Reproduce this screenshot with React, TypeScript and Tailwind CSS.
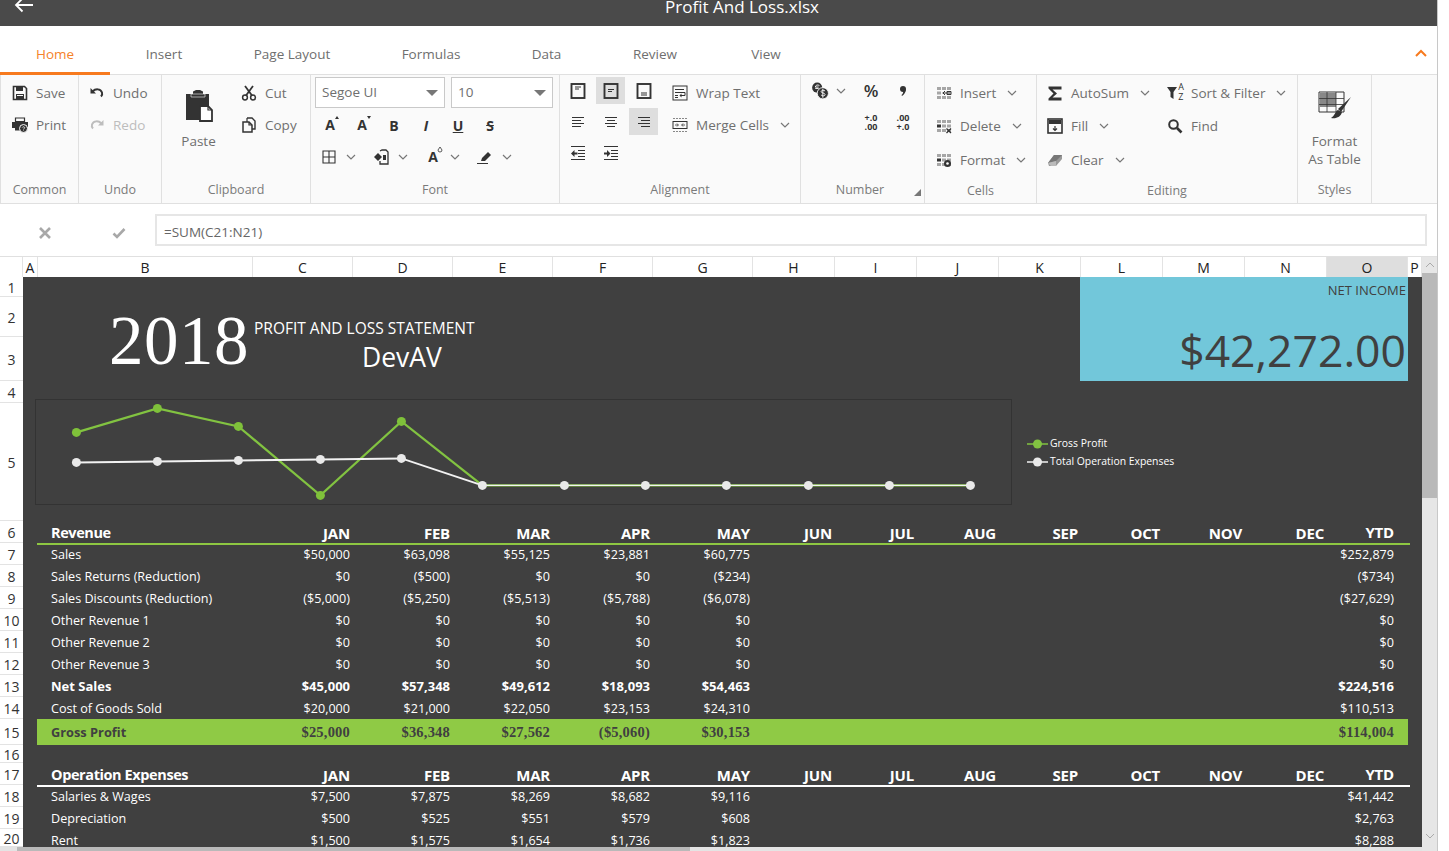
import type { ReactNode } from 'react';

const MONTHS = ['JAN', 'FEB', 'MAR', 'APR', 'MAY', 'JUN', 'JUL', 'AUG', 'SEP', 'OCT', 'NOV', 'DEC'];

const TABS = [
  { name: 'Home', width: 'w-[110px]', active: true },
  { name: 'Insert', width: 'w-[108px]' },
  { name: 'Page Layout', width: 'w-[148px]' },
  { name: 'Formulas', width: 'w-[130px]' },
  { name: 'Data', width: 'w-[101px]' },
  { name: 'Review', width: 'w-[116px]' },
  { name: 'View', width: 'w-[106px]' },
];

const COLUMNS = ['', 'A', 'B', 'C', 'D', 'E', 'F', 'G', 'H', 'I', 'J', 'K', 'L', 'M', 'N', 'O', 'P'];

const ROW_NUMBERS = [
  { n: 1, h: 'h-[20px]' },
  { n: 2, h: 'h-[40px]' },
  { n: 3, h: 'h-[44px]' },
  { n: 4, h: 'h-[22px]' },
  { n: 5, h: 'h-[118px]' },
  { n: 6, h: 'h-[22px]' },
  { n: 7, h: 'h-[22px]' },
  { n: 8, h: 'h-[22px]' },
  { n: 9, h: 'h-[22px]' },
  { n: 10, h: 'h-[22px]' },
  { n: 11, h: 'h-[22px]' },
  { n: 12, h: 'h-[22px]' },
  { n: 13, h: 'h-[22px]' },
  { n: 14, h: 'h-[22px]' },
  { n: 15, h: 'h-[26px]' },
  { n: 16, h: 'h-[18px]' },
  { n: 17, h: 'h-[22px]' },
  { n: 18, h: 'h-[22px]' },
  { n: 19, h: 'h-[22px]' },
  { n: 20, h: 'h-[18px]' },
];

const REVENUE = [
  { label: 'Sales', vals: ['$50,000', '$63,098', '$55,125', '$23,881', '$60,775'], ytd: '$252,879' },
  { label: 'Sales Returns (Reduction)', vals: ['$0', '($500)', '$0', '$0', '($234)'], ytd: '($734)' },
  { label: 'Sales Discounts (Reduction)', vals: ['($5,000)', '($5,250)', '($5,513)', '($5,788)', '($6,078)'], ytd: '($27,629)' },
  { label: 'Other Revenue 1', vals: ['$0', '$0', '$0', '$0', '$0'], ytd: '$0' },
  { label: 'Other Revenue 2', vals: ['$0', '$0', '$0', '$0', '$0'], ytd: '$0' },
  { label: 'Other Revenue 3', vals: ['$0', '$0', '$0', '$0', '$0'], ytd: '$0' },
  { label: 'Net Sales', vals: ['$45,000', '$57,348', '$49,612', '$18,093', '$54,463'], ytd: '$224,516', bold: true },
  { label: 'Cost of Goods Sold', vals: ['$20,000', '$21,000', '$22,050', '$23,153', '$24,310'], ytd: '$110,513' },
];

const EXPENSES = [
  { label: 'Salaries & Wages', vals: ['$7,500', '$7,875', '$8,269', '$8,682', '$9,116'], ytd: '$41,442' },
  { label: 'Depreciation', vals: ['$500', '$525', '$551', '$579', '$608'], ytd: '$2,763' },
  { label: 'Rent', vals: ['$1,500', '$1,575', '$1,654', '$1,736', '$1,823'], ytd: '$8,288' },
];

const GROSS = [[41, 33], [122, 9], [203, 27], [285, 96], [366, 22], [447, 86], [529, 86], [610, 86], [691, 86], [773, 86], [854, 86], [935, 86]];
const TOTAL = [[41, 63], [122, 62], [203, 61], [285, 60], [366, 59], [447, 86], [529, 86], [610, 86], [691, 86], [773, 86], [854, 86], [935, 86]];

const ROW_GRID = 'grid grid-cols-[216px_repeat(5,100px)_repeat(7,82px)_81px]';

function Svg({ children, size = 16 }: { children: ReactNode; size?: number }) {
  return (
    <svg width={size} height={size} viewBox="0 0 16 16" fill="none" className="shrink-0">
      {children}
    </svg>
  );
}

function Chevron() {
  return (
    <svg width="10" height="6" viewBox="0 0 10 6" fill="none" className="shrink-0">
      <path d="M1 1l4 4 4-4" stroke="#777" strokeWidth="1.2" />
    </svg>
  );
}

const SaveIcon = () => (
  <Svg>
    <path d="M1.500 1.500h11l2 2v11h-13z" stroke="#333" strokeWidth="1.600" />
    <path d="M4 1.500h7V6H4zM4 9h8v5H4z" fill="#333" />
    <path d="M5 10.500h6" stroke="#fafafa" />
  </Svg>
);
const PrintIcon = () => (
  <Svg>
    <path d="M3.500 1h9v3.500h-9z" stroke="#333" strokeWidth="1.200" />
    <path d="M0 5h16v5H9v3.500H3V11H0z" fill="#333" />
    <circle cx="11.500" cy="11.500" r="4" fill="#333" stroke="#fafafa" />
    <path d="M10.300 10.500c.5-1.100 2.400-.8 2.400.3 0 .8-1.200.8-1.200 1.700M11.500 13.500v.6" stroke="#fff" strokeWidth=".8" />
  </Svg>
);
const UndoIcon = ({ color = '#333', flip = false }: { color?: string; flip?: boolean }) => (
  <Svg>
    <g transform={flip ? 'translate(16 0) scale(-1 1)' : undefined}>
      <path d="M1.500 3v5.500H7z" fill={color} />
      <path d="M3.500 6.500c3-3 8-3 9.500 1 .5 1.500 0 3-1 4" stroke={color} strokeWidth="2" />
    </g>
  </Svg>
);
const PasteIcon = () => (
  <svg width="28" height="33" viewBox="0 0 28 33" fill="none" className="shrink-0">
    <path d="M1 5h7V2.500L11 1h4l3 1.500V5h6v26H1z" fill="#333" />
    <path d="M6 5h14v3H6z" fill="#333" stroke="#fafafa" strokeWidth=".6" />
    <path d="M15 17h8l4 4v11H15z" fill="#fff" stroke="#333" strokeWidth="1.800" />
    <path d="M23 17v4h4" stroke="#333" strokeWidth="1.200" />
  </svg>
);
const CutIcon = () => (
  <Svg>
    <circle cx="4" cy="12.500" r="2.400" stroke="#333" strokeWidth="1.500" />
    <circle cx="12" cy="12.500" r="2.400" stroke="#333" strokeWidth="1.500" />
    <path d="M5 10.500L12 1M11 10.500L4 1" stroke="#333" strokeWidth="1.800" />
  </Svg>
);
const CopyIcon = () => (
  <Svg>
    <path d="M6 1h5l3 3v8h-3" stroke="#333" strokeWidth="1.400" />
    <path d="M2 5h6l3 3v7H2z" fill="#fafafa" stroke="#333" strokeWidth="1.500" />
    <path d="M6 1v4M8 5v3h3" stroke="#333" strokeWidth="1.200" />
  </Svg>
);
const GridIcon = () => (
  <Svg>
    <path d="M2 2h12v12H2zM8 2v12M2 8h12" stroke="#333" strokeWidth="1.100" />
  </Svg>
);
const FillColorIcon = () => (
  <Svg>
    <path d="M7 2l2-1h4l2 2v12H7v-3" stroke="#333" strokeWidth="1.300" />
    <path d="M5 4l4 4-4 4-4-4z" fill="#333" />
    <path d="M10 6h3v5h-3z" fill="#333" />
  </Svg>
);
const PenIcon = () => (
  <Svg>
    <path d="M5 9l6-6 3 3-6 6H4z" fill="#333" />
    <path d="M0 14.500h11" stroke="#333" strokeWidth="1" />
  </Svg>
);
const LetterIcon = ({ mark }: { mark: 'up' | 'down' | 'drop' }) => (
  <span className="relative flex w-4 h-4 items-center justify-center text-[14px] leading-none font-bold text-[#333]">
    A
    <svg width="6" height="6" viewBox="0 0 6 6" className="absolute -right-0.5 -top-0.5">
      {mark === 'up' && <path d="M3 1l2 3H1z" fill="#333" />}
      {mark === 'down' && <path d="M3 4L1 1h4z" fill="#333" />}
      {mark === 'drop' && <path d="M3 0l2 3a2 2 0 11-4 0z" stroke="#333" fill="none" strokeWidth=".8" />}
    </svg>
  </span>
);
const AlignBox = ({ v }: { v: 'top' | 'mid' | 'bot' }) => {
  const y = v === 'top' ? 4 : v === 'mid' ? 6.500 : 10;
  return (
    <Svg>
      <rect x="1.500" y="1" width="13" height="14" stroke="#333" strokeWidth="1.900" />
      <path d={`M5 ${y}h6M5 ${y + 2}h${v === 'bot' ? 6 : 4}`} stroke="#333" strokeWidth="1" />
    </Svg>
  );
};
const AlignLines = ({ a }: { a: 'l' | 'c' | 'r' }) => {
  const d = {
    l: 'M2 3.500h12M2 6.500h9M2 9.500h12M2 12.500h9',
    c: 'M2 3.500h12M4 6.500h8M2 9.500h12M4 12.500h8',
    r: 'M2 3.500h12M5 6.500h9M2 9.500h12M5 12.500h9',
  }[a];
  return (
    <Svg>
      <path d={d} stroke="#333" strokeWidth="1" />
    </Svg>
  );
};
const IndentIcon = ({ more }: { more?: boolean }) => (
  <Svg>
    <path d="M1 1.500h14M8 5.500h7M8 8.500h7M8 11.500h7M1 14.500h14" stroke="#333" strokeWidth="1.100" />
    <path d={more ? 'M1 7.500h3V5l3.500 3.500L4 12V9.500H1z' : 'M7.500 7.500h-3V5L1 8.500 4.500 12V9.500h3z'} fill="#333" />
  </Svg>
);
const WrapIcon = () => (
  <Svg>
    <rect x="1" y="1" width="14" height="14" stroke="#333" strokeWidth="1" />
    <path d="M3 4.500h9M3 7.500h10v3H8M3 10.500h3M3 12.500h3" stroke="#333" strokeWidth="1" />
    <path d="M9.500 8.500l-2 2 2 2z" fill="#333" />
  </Svg>
);
const MergeIcon = () => (
  <Svg>
    <path d="M1 1.500h14M1 14.500h14" stroke="#888" strokeWidth="1.200" strokeDasharray="2 1" />
    <rect x="1" y="4.500" width="14" height="7" stroke="#333" strokeWidth="1" />
    <path d="M3 8h3M13 8h-3M5 6.500L6.500 8 5 9.500M11 6.500L9.500 8 11 9.500" stroke="#333" strokeWidth=".8" />
  </Svg>
);
const CoinsIcon = () => (
  <Svg size={18}>
    <circle cx="5.500" cy="5" r="4.500" fill="#333" />
    <circle cx="10.500" cy="10" r="5" fill="#333" stroke="#fafafa" strokeWidth=".8" />
    <path d="M7.500 3.200C6 2 4 2.800 3.800 4.500h3M3.800 5.800h3" stroke="#fff" strokeWidth=".8" />
    <path d="M12.500 8c-1-1-3.500-.8-3.500.6 0 1.600 3.500.8 3.500 2.600 0 1.400-2.500 1.400-3.500.4M10.500 6v8" stroke="#fff" strokeWidth=".8" />
  </Svg>
);
const CommaIcon = () => (
  <Svg>
    <circle cx="8" cy="6" r="3" fill="#333" />
    <path d="M10.800 6c.3 3-1.500 5.500-3.800 7L6.500 12c1.200-1 2-2.500 1.500-3.500z" fill="#333" />
  </Svg>
);
const CellsIcon = ({ kind }: { kind: 'insert' | 'delete' | 'format' }) => (
  <Svg>
    <path d="M1 2h4v3H1zM6 2h4v3H6zM11 2h4v3h-4zM1 11h4v3H1zM6 11h4v3H6zM11 11h4v3h-4z" fill="#a6a6a6" />
    {kind === 'insert' ? (
      <>
        <path d="M1 6.500h4v3H1z" fill="#a6a6a6" />
        <path d="M6.500 8h8M9 6L7 8l2 2M11 6.500h4v3h-4z" stroke="#333" strokeWidth="1" />
      </>
    ) : (
      <>
        <path d="M1 6.500h4v3H1z" fill="#333" />
        <path d="M6 6.500h4v3H6zM11 6.500h4v3h-4z" fill="#a6a6a6" />
      </>
    )}
    {kind === 'delete' && <path d="M10.500 10.500l4.500 4.500M15 10.500L10.500 15" stroke="#333" strokeWidth="1.300" />}
    {kind === 'format' && (
      <>
        <circle cx="11.500" cy="11.500" r="3.500" fill="#333" />
        <circle cx="11.500" cy="11.500" r="1.300" fill="#fff" />
      </>
    )}
  </Svg>
);
const SigmaIcon = () => (
  <Svg>
    <path d="M1.500 1.500h13v3h-9l4.500 4-4.500 4h9v3h-13v-2l5-5-5-5z" fill="#333" />
  </Svg>
);
const FillIcon = () => (
  <Svg>
    <rect x="1" y="1" width="14" height="14" stroke="#333" strokeWidth="1.600" />
    <path d="M2 2h12v4H2z" fill="#333" />
    <path d="M8 8v4M6 10.500l2 2 2-2" stroke="#333" strokeWidth="1.200" />
  </Svg>
);
const SortIcon = () => (
  <span className="relative flex w-4 h-4 shrink-0">
    <Svg>
      <path d="M0 2h10L6.500 7v7l-3-2V7z" fill="#333" />
    </Svg>
    <span className="absolute right-[-1px] top-[-3px] text-[9px] leading-[10px] text-[#333]">
      A<br />Z
    </span>
  </span>
);
const FindIcon = () => (
  <Svg>
    <circle cx="6.500" cy="6.500" r="4.300" stroke="#333" strokeWidth="2" />
    <path d="M10 10l4.500 4.500" stroke="#333" strokeWidth="2.600" />
  </Svg>
);
const ClearIcon = () => (
  <Svg>
    <path d="M7 3h8v4l-6 7H2l-1-3z" fill="#999" />
    <path d="M1 11l6-8h8l-6 6z" fill="#777" />
    <path d="M1 11l3 3h5V9z" fill="#bbb" />
  </Svg>
);
const TableBrushIcon = () => (
  <svg width="34" height="29" viewBox="0 0 34 29" fill="none" className="shrink-0">
    <path d="M1 1h25v20H1z" fill="#fafafa" stroke="#333" strokeWidth="1" />
    <path d="M2 2h16v14H2z" fill="#888" />
    <path d="M1 7.500h25M1 13.500h25M9 1v20M18 1v20" stroke="#333" strokeWidth=".8" />
    <path d="M33 6l-13 12 3 3z" fill="#333" />
    <path d="M20 19c-3 1-3 6-7 8 5 1 10-1 11-6z" fill="#333" />
  </svg>
);

function RibbonButton({ icon, label, muted, chevron, h = 'h-8' }: { icon: ReactNode; label: string; muted?: boolean; chevron?: boolean; h?: string }) {
  return (
    <div className={`flex items-center text-[13.500px] ${h}`}>
      <span className="flex w-6 shrink-0">{icon}</span>
      <span className={muted ? 'text-[#bdbdbd]' : 'text-[#6f6f6f]'}>{label}</span>
      {chevron && (
        <span className="ml-[11px]">
          <Chevron />
        </span>
      )}
    </div>
  );
}

function RibbonGroup({ label, width, children, labelPad = '' }: { label: string; width: string; children: ReactNode; labelPad?: string }) {
  return (
    <div className={`relative flex flex-col border-r border-[#e0e0e0] ${width}`}>
      <div className="h-[102px]">{children}</div>
      <div className={`flex-1 text-center leading-[27px] text-[#7a7a7a] ${labelPad}`}>{label}</div>
    </div>
  );
}

function Cell({ children, width = 'w-8', height = 'h-8', active }: { children: ReactNode; width?: string; height?: string; active?: boolean }) {
  return (
    <div className={`flex items-center justify-center ${width} ${height}`}>
      <div className={`flex items-center justify-center w-[29px] h-[27px] ${active ? 'bg-[#dedede]' : ''}`}>{children}</div>
    </div>
  );
}

function Combo({ text, width }: { text: string; width: string }) {
  return (
    <div className={`flex items-center justify-between h-[31px] px-[6px] bg-white border border-[#c9c9c9] text-[13.500px] text-[#6f6f6f] ${width}`}>
      <span>{text}</span>
      <svg width="12" height="6" viewBox="0 0 12 6">
        <path d="M0 0h12L6 6z" fill="#777" />
      </svg>
    </div>
  );
}

function DataRow({ label, vals, ytd, bold }: { label: string; vals: string[]; ytd: string; bold?: boolean }) {
  return (
    <div className={`ml-[14px] w-[1371px] h-[22px] leading-[22px] text-white ${ROW_GRID} ${bold ? 'font-bold text-[13px]' : 'pt-[1px] text-[12.600px]'}`}>
      <div className="pl-[14px] whitespace-nowrap">{label}</div>
      {vals.map((v, i) => (
        <div key={i} className="pr-[3px] text-right">
          {v}
        </div>
      ))}
      <div className="col-start-14 pr-[14px] text-right">{ytd}</div>
    </div>
  );
}

function HeaderRow({ label, line }: { label: string; line: string }) {
  return (
    <div className={`ml-[14px] w-[1373px] h-[22px] border-b-2 box-content leading-[24px] font-bold text-white ${line} ${ROW_GRID}`}>
      <div className="pl-[14px] whitespace-nowrap text-[14.500px] tracking-[-0.4px]">{label}</div>
      {MONTHS.map((m) => (
        <div key={m} className="pr-[3px] text-right text-[15px] tracking-[-0.2px]">
          {m}
        </div>
      ))}
      <div className="pr-[14px] text-right text-[15px] leading-[22px] tracking-[-0.2px]">YTD</div>
    </div>
  );
}

export default function App() {
  return (
    <div className="w-[1449px] h-[851px] overflow-hidden bg-white font-['Open_Sans',sans-serif] text-[12.500px]">
      <div className="w-[1438px] h-full border-r border-[#c8c8c8] flex flex-col">
        {/* Title bar */}
        <div className="relative h-[26px] shrink-0 bg-[#4a4a4a] flex items-center justify-center pb-[13px]">
          <svg width="20" height="16" viewBox="0 0 20 16" fill="none" className="absolute left-[14px] top-[-3px]">
            <path d="M19 8H2M8.500 1.500L2 8l6.500 6.500" stroke="#fff" strokeWidth="1.800" />
          </svg>
          <span className="ml-[47px] text-[17px] text-white">Profit And Loss.xlsx</span>
        </div>

        {/* Tabs */}
        <div className="relative h-[49px] shrink-0 flex border-b border-[#e0e0e0]">
          {TABS.map((t) => (
            <div
              key={t.name}
              className={`${t.width} h-[49px] pt-[19px] text-center text-[13.500px] leading-[18px] ${t.active ? 'text-[#f5822a] border-b-[3px] border-[#f77a1e]' : 'text-[#6f6f6f]'}`}
            >
              {t.name}
            </div>
          ))}
          <svg width="12" height="8" viewBox="0 0 12 8" fill="none" className="absolute right-[10px] top-[23px]">
            <path d="M1 7l5-5 5 5" stroke="#f77a1e" strokeWidth="2" />
          </svg>
        </div>

        {/* Ribbon */}
        <div className="h-[129px] shrink-0 flex bg-[#fafafa] border-b border-l border-[#e0e0e0]">
          <RibbonGroup label="Common" width="w-[78px]">
            <div className="pt-[2px] pl-[11px]">
              <RibbonButton icon={<SaveIcon />} label="Save" />
              <RibbonButton icon={<PrintIcon />} label="Print" />
            </div>
          </RibbonGroup>
          <RibbonGroup label="Undo" width="w-[83px]">
            <div className="pt-[2px] pl-[10px]">
              <RibbonButton icon={<UndoIcon />} label="Undo" />
              <RibbonButton icon={<UndoIcon color="#bdbdbd" flip />} label="Redo" muted />
            </div>
          </RibbonGroup>
          <RibbonGroup label="Clipboard" width="w-[149px]">
            <div className="flex pt-[2px]">
              <div className="w-[73px] pt-[12px] flex flex-col items-center">
                <PasteIcon />
                <span className="mt-[10px] leading-[18px] text-[13.500px] text-[#6f6f6f]">Paste</span>
              </div>
              <div className="pl-[6px]">
                <RibbonButton icon={<CutIcon />} label="Cut" />
                <RibbonButton icon={<CopyIcon />} label="Copy" />
              </div>
            </div>
          </RibbonGroup>
          <RibbonGroup label="Font" width="w-[249px]">
            <div className="pl-[3px]">
              <div className="flex gap-[6px] pt-[2px] pl-[1px] pb-[1px]">
                <Combo text="Segoe UI" width="w-[130px]" />
                <Combo text="10" width="w-[102px]" />
              </div>
              <div className="flex">
                <Cell><LetterIcon mark="up" /></Cell>
                <Cell><LetterIcon mark="down" /></Cell>
                <Cell><span className="text-[14px] font-bold text-[#333]">B</span></Cell>
                <Cell><span className="text-[14px] font-bold italic text-[#333]">I</span></Cell>
                <Cell><span className="text-[14px] font-bold underline text-[#333]">U</span></Cell>
                <Cell><span className="text-[14px] font-bold line-through text-[#333]">S</span></Cell>
              </div>
              <div className="flex">
                {[<GridIcon key="g" />, <FillColorIcon key="f" />, <LetterIcon key="l" mark="drop" />, <PenIcon key="p" />].map((icon, i) => (
                  <div key={i} className="flex items-center w-[52px] h-8">
                    <span className="flex justify-center w-[30px]">{icon}</span>
                    <span className="flex justify-center w-[14px]"><Chevron /></span>
                  </div>
                ))}
              </div>
            </div>
          </RibbonGroup>
          <RibbonGroup label="Alignment" width="w-[241px]">
            <div className="flex pl-[1px]">
              <div className="grid grid-cols-3 w-[99px]">
                <Cell width="w-[33px]" height="h-[31px]"><AlignBox v="top" /></Cell>
                <Cell width="w-[33px]" height="h-[31px]" active><AlignBox v="mid" /></Cell>
                <Cell width="w-[33px]" height="h-[31px]"><AlignBox v="bot" /></Cell>
                <Cell width="w-[33px]" height="h-[31px]"><AlignLines a="l" /></Cell>
                <Cell width="w-[33px]" height="h-[31px]"><AlignLines a="c" /></Cell>
                <Cell width="w-[33px]" height="h-[31px]" active><AlignLines a="r" /></Cell>
                <Cell width="w-[33px]" height="h-[31px]"><IndentIcon /></Cell>
                <Cell width="w-[33px]" height="h-[31px]"><IndentIcon more /></Cell>
              </div>
              <div className="pl-[12px] pt-[2px]">
                <RibbonButton icon={<WrapIcon />} label="Wrap Text" />
                <RibbonButton icon={<MergeIcon />} label="Merge Cells" chevron />
              </div>
            </div>
          </RibbonGroup>
          <RibbonGroup label="Number" width="w-[124px]" labelPad="pr-[5px]">
            <div className="flex items-center h-[31px] pl-[4px]">
              <span className="flex justify-center w-[30px]"><CoinsIcon /></span>
              <span className="flex justify-center w-[12px]"><Chevron /></span>
              <span className="w-[8px]" />
              <span className="w-[32px] text-center text-[17px] font-semibold leading-none text-[#333]">%</span>
              <span className="flex justify-center w-[32px]"><CommaIcon /></span>
            </div>
            <div className="flex items-center h-[31px] pl-[54px] text-[9px] leading-[9px] font-bold text-[#333]">
              <span className="w-[32px] text-center">+.0<br />.00</span>
              <span className="w-[32px] text-center">.00<br />+.0</span>
            </div>
            <svg width="7" height="7" viewBox="0 0 7 7" className="absolute right-[3px] bottom-[7px]">
              <path d="M7 0v7H0z" fill="#777" />
            </svg>
          </RibbonGroup>
          <RibbonGroup label="Cells" width="w-[112px]">
            <div className="pt-[2px] pl-[11px]">
              <RibbonButton icon={<CellsIcon kind="insert" />} label="Insert" chevron />
              <RibbonButton icon={<CellsIcon kind="delete" />} label="Delete" chevron h="h-[34px]" />
              <RibbonButton icon={<CellsIcon kind="format" />} label="Format" chevron h="h-[34px]" />
            </div>
          </RibbonGroup>
          <RibbonGroup label="Editing" width="w-[261px]">
            <div className="flex pt-[2px]">
              <div className="w-[130px] pl-[10px]">
                <RibbonButton icon={<SigmaIcon />} label="AutoSum" chevron />
                <RibbonButton icon={<FillIcon />} label="Fill" chevron h="h-[34px]" />
                <RibbonButton icon={<ClearIcon />} label="Clear" chevron h="h-[34px]" />
              </div>
              <div>
                <RibbonButton icon={<SortIcon />} label="Sort & Filter" chevron />
                <RibbonButton icon={<FindIcon />} label="Find" h="h-[34px]" />
              </div>
            </div>
          </RibbonGroup>
          <RibbonGroup label="Styles" width="w-[74px]">
            <div className="flex flex-col items-center pt-[16px]">
              <TableBrushIcon />
              <span className="mt-[12px] text-center leading-[18px] text-[13.500px] text-[#6f6f6f]">
                Format<br />As Table
              </span>
            </div>
          </RibbonGroup>
        </div>

        {/* Formula bar */}
        <div className="h-[53px] shrink-0 flex items-center border-b border-[#e0e0e0]">
          <div className="w-[155px] pt-[5px] flex items-center">
            <svg width="14" height="14" viewBox="0 0 14 14" className="ml-[38px]">
              <path d="M2 2l10 10M12 2L2 12" stroke="#a8a8a8" strokeWidth="2.600" />
            </svg>
            <svg width="14" height="12" viewBox="0 0 14 12" className="ml-[60px]" fill="none">
              <path d="M1.500 6.500L5 10l7.500-8" stroke="#a8a8a8" strokeWidth="2.600" />
            </svg>
          </div>
          <div className="w-[1272px] h-8 pl-[7px] pt-[5px] flex items-center bg-white border-2 border-[#e6e6e6] text-[13.500px] text-[#666]">=SUM(C21:N21)</div>
        </div>

        <div className="flex-1 flex overflow-hidden">
          <div className="w-[1422px] flex flex-col">
            {/* Column headers */}
            <div className="h-5 shrink-0 overflow-hidden grid grid-cols-[23px_15px_215px_repeat(5,100px)_repeat(7,82px)_81px_14px] text-[14px] leading-[22px] text-[#222]">
              {COLUMNS.map((c) => (
                <div key={c} className={`h-5 text-center overflow-hidden border-r border-[#e3e3e3] ${c === 'O' ? 'bg-[#dedede]' : ''}`}>
                  {c}
                </div>
              ))}
            </div>

            <div className="flex flex-1 overflow-hidden">
              {/* Row numbers */}
              <div className="w-[23px] shrink-0 flex flex-col text-[14px] text-[#333]">
                {ROW_NUMBERS.map((r) => (
                  <div key={r.n} className={`${r.h} shrink-0 pt-[1px] flex items-center justify-center border-b border-[#e3e3e3]`}>
                    {r.n}
                  </div>
                ))}
              </div>

              {/* Sheet */}
              <div className="flex-1 bg-[#404040] overflow-hidden">
                <div className="flex h-[104px]">
                  <div className="w-[1057px] flex items-start pl-[86px] pt-[25px]">
                    <span className="text-[69px] leading-[78px] tracking-[0.5px] text-white font-['Liberation_Serif',serif]">2018</span>
                    <div className="ml-[5px] pt-[16px] w-[230px] text-white">
                      <div className="text-[15.500px] leading-[20px] whitespace-nowrap">PROFIT AND LOSS STATEMENT</div>
                      <div className="ml-[108px] mt-[2px] text-[26.500px] leading-[34px]">DevAV</div>
                    </div>
                  </div>
                  <div className="w-[328px] h-full bg-[#72c7da] flex flex-col items-end pr-[2px] text-[#404040]">
                    <div className="mt-[4px] text-[13px] leading-[18px]">NET INCOME</div>
                    <div className="mt-[21px] text-[44.500px] leading-[60px]">$42,272.00</div>
                  </div>
                </div>

                {/* Chart */}
                <div className="h-[140px] pt-[18px] pl-[12px] flex">
                  <svg width="977" height="106" viewBox="0 0 977 106" fill="none" className="shrink-0">
                    <rect x=".5" y=".5" width="976" height="105" stroke="#333" />
                    <g transform="translate(0.4 0.4)">
                      <polyline points={GROSS.map((p) => p.join(',')).join(' ')} stroke="#82c341" strokeWidth="2.200" />
                      <polyline points={TOTAL.slice(0, 6).map((p) => p.join(',')).join(' ')} stroke="#f2f2f2" strokeWidth="2" />
                      <polyline points={TOTAL.slice(5).map((p) => p.join(',')).join(' ')} stroke="#f2f2f2" strokeWidth="1.400" />
                      {GROSS.slice(0, 5).map(([x, y]) => (
                        <circle key={x} cx={x} cy={y} r="4.500" fill="#7fc13a" />
                      ))}
                      {TOTAL.map(([x, y]) => (
                        <circle key={x} cx={x} cy={y} r="4.500" fill="#e9e9e9" />
                      ))}
                    </g>
                  </svg>
                  <div className="ml-[15px] pt-[36px] text-[10.400px] text-white">
                    <div className="flex items-center h-[18px]">
                      <svg width="23" height="10" viewBox="0 0 23 10">
                        <path d="M0 5h21" stroke="#82c341" strokeWidth="1.500" />
                        <circle cx="10.500" cy="5" r="4.500" fill="#82c341" />
                      </svg>
                      Gross Profit
                    </div>
                    <div className="flex items-center h-[18px]">
                      <svg width="23" height="10" viewBox="0 0 23 10">
                        <path d="M0 5h21" stroke="#f2f2f2" strokeWidth="1.500" />
                        <circle cx="10.500" cy="5" r="4.500" fill="#e9e9e9" />
                      </svg>
                      Total Operation Expenses
                    </div>
                  </div>
                </div>

                <HeaderRow label="Revenue" line="border-[#8ec742]" />
                <div className="-mt-[2px]">
                  {REVENUE.map((r) => (
                    <DataRow key={r.label} {...r} />
                  ))}
                </div>
                <div className={`ml-[14px] w-[1371px] h-[26px] leading-[26px] bg-[#8fca45] text-[#404040] font-bold ${ROW_GRID}`}>
                  <div className="pl-[14px] text-[12.800px]">Gross Profit</div>
                  {['$25,000', '$36,348', '$27,562', '($5,060)', '$30,153'].map((v) => (
                    <div key={v} className="pr-[3px] text-right font-['Liberation_Serif',serif] text-[14.500px] tracking-[0.2px]">
                      {v}
                    </div>
                  ))}
                  <div className="col-start-14 pr-[14px] text-right font-['Liberation_Serif',serif] text-[14.500px] tracking-[0.2px]">$114,004</div>
                </div>
                <div className="h-[18px]" />
                <HeaderRow label="Operation Expenses" line="border-white" />
                <div className="-mt-[2px]">
                  {EXPENSES.map((r) => (
                    <DataRow key={r.label} {...r} />
                  ))}
                </div>
              </div>
            </div>

            {/* Horizontal scrollbar */}
            <div className="h-[4px] shrink-0 pl-[17px] bg-[#e4e4e4]">
              <div className="w-[673px] h-full bg-[#b9b9b9]" />
            </div>
          </div>

          {/* Vertical scrollbar */}
          <div className="w-[15px] shrink-0 flex flex-col items-center bg-[#e6e6e6]">
            <div className="h-4 flex items-center">
              <svg width="10" height="6" viewBox="0 0 10 6" fill="none">
                <path d="M1 5l4-4 4 4" stroke="#aaa" />
              </svg>
            </div>
            <div className="w-full h-[225px] bg-[#b9b9b9]" />
            <div className="flex-1" />
            <div className="h-[20px] pt-[2px]">
              <svg width="10" height="6" viewBox="0 0 10 6" fill="none">
                <path d="M1 1l4 4 4-4" stroke="#aaa" />
              </svg>
            </div>
          </div>
        </div>
      </div>
    </div>
  );
}
